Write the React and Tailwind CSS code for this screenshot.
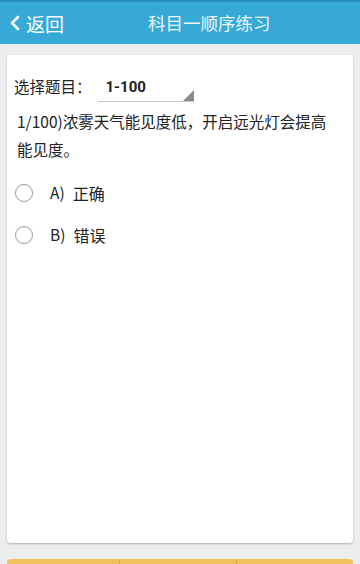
export default function App() {
    const options = [
        { key: "A", text: "正确" },
        { key: "B", text: "错误" },
    ]

    return (
        <main
            className="w-[360px] h-[564px] bg-[#eceeee] overflow-hidden flex flex-col"
            style={{ fontFamily: '"Noto Sans CJK SC", "Noto Sans", sans-serif' }}
        >
            <header className="h-[44px] bg-[#36a9d7] border-t-2 border-[#2a8fb8] flex items-center relative text-white shrink-0">
                <div className="flex items-center pl-[9px] gap-[6px]">
                    <svg width="11" height="16" viewBox="0 0 11 16">
                        <path d="M9 2 L3 8 L9 14" stroke="white" strokeWidth="2.6" fill="none" strokeLinecap="round" strokeLinejoin="round" />
                    </svg>
                    <span className="text-[19px] leading-none">返回</span>
                </div>
                <div className="absolute left-[148px] top-0 h-full flex items-center text-[17.5px] leading-none text-[#eaf6fb]">
                    科目一顺序练习
                </div>
            </header>

            <div className="mx-[7px] mt-[11px] h-[488px] bg-white rounded-[4px] shadow-[0_1px_2px_rgba(0,0,0,0.25)] pt-[17px] shrink-0">
                <div className="flex items-center pl-[7px] h-[30px]">
                    <span className="text-[15.5px] text-[#222]">选择题目：</span>
                    <div className="ml-[6px] w-[96px] h-[30px] relative border-b border-[#c8c8c8]">
                        <span className="absolute left-[8px] top-[4px] text-[15px] font-bold text-[#222]" style={{ fontFamily: '"Roboto", "Noto Sans", sans-serif' }}>1-100</span>
                        <svg className="absolute right-0 bottom-0" width="11" height="11" viewBox="0 0 11 11">
                            <polygon points="11,0 11,11 0,11" fill="#8a8a8a" />
                        </svg>
                    </div>
                </div>

                <p className="pl-[10px] pr-[14px] mt-[5px] text-[15.5px] leading-[28px] text-[#222]">
                    1/100)浓雾天气能见度低，开启远光灯会提高能见度。
                </p>

                <div className="mt-[18px] flex flex-col gap-[18px]">
                    {options.map((o) => (
                        <div key={o.key} className="flex items-center h-[24px] pl-[8px]">
                            <span className="w-[18px] h-[18px] rounded-full border border-[#9a9a9a] bg-white"></span>
                            <span className="ml-[17px] text-[15.5px] text-[#222]">{o.key})</span>
                            <span className="ml-[8px] text-[16px] text-[#222]">{o.text}</span>
                        </div>
                    ))}
                </div>
            </div>

            <div className="mx-[7px] mt-[16px] h-[20px] flex rounded-t-[4px] overflow-hidden shrink-0">
                <div className="w-[113px] bg-[#f0c25e] border-r border-[#d9a94a]"></div>
                <div className="w-[117px] bg-[#f0c25e] border-r border-[#d9a94a]"></div>
                <div className="flex-1 bg-[#f0c25e]"></div>
            </div>
        </main>
    )
}
